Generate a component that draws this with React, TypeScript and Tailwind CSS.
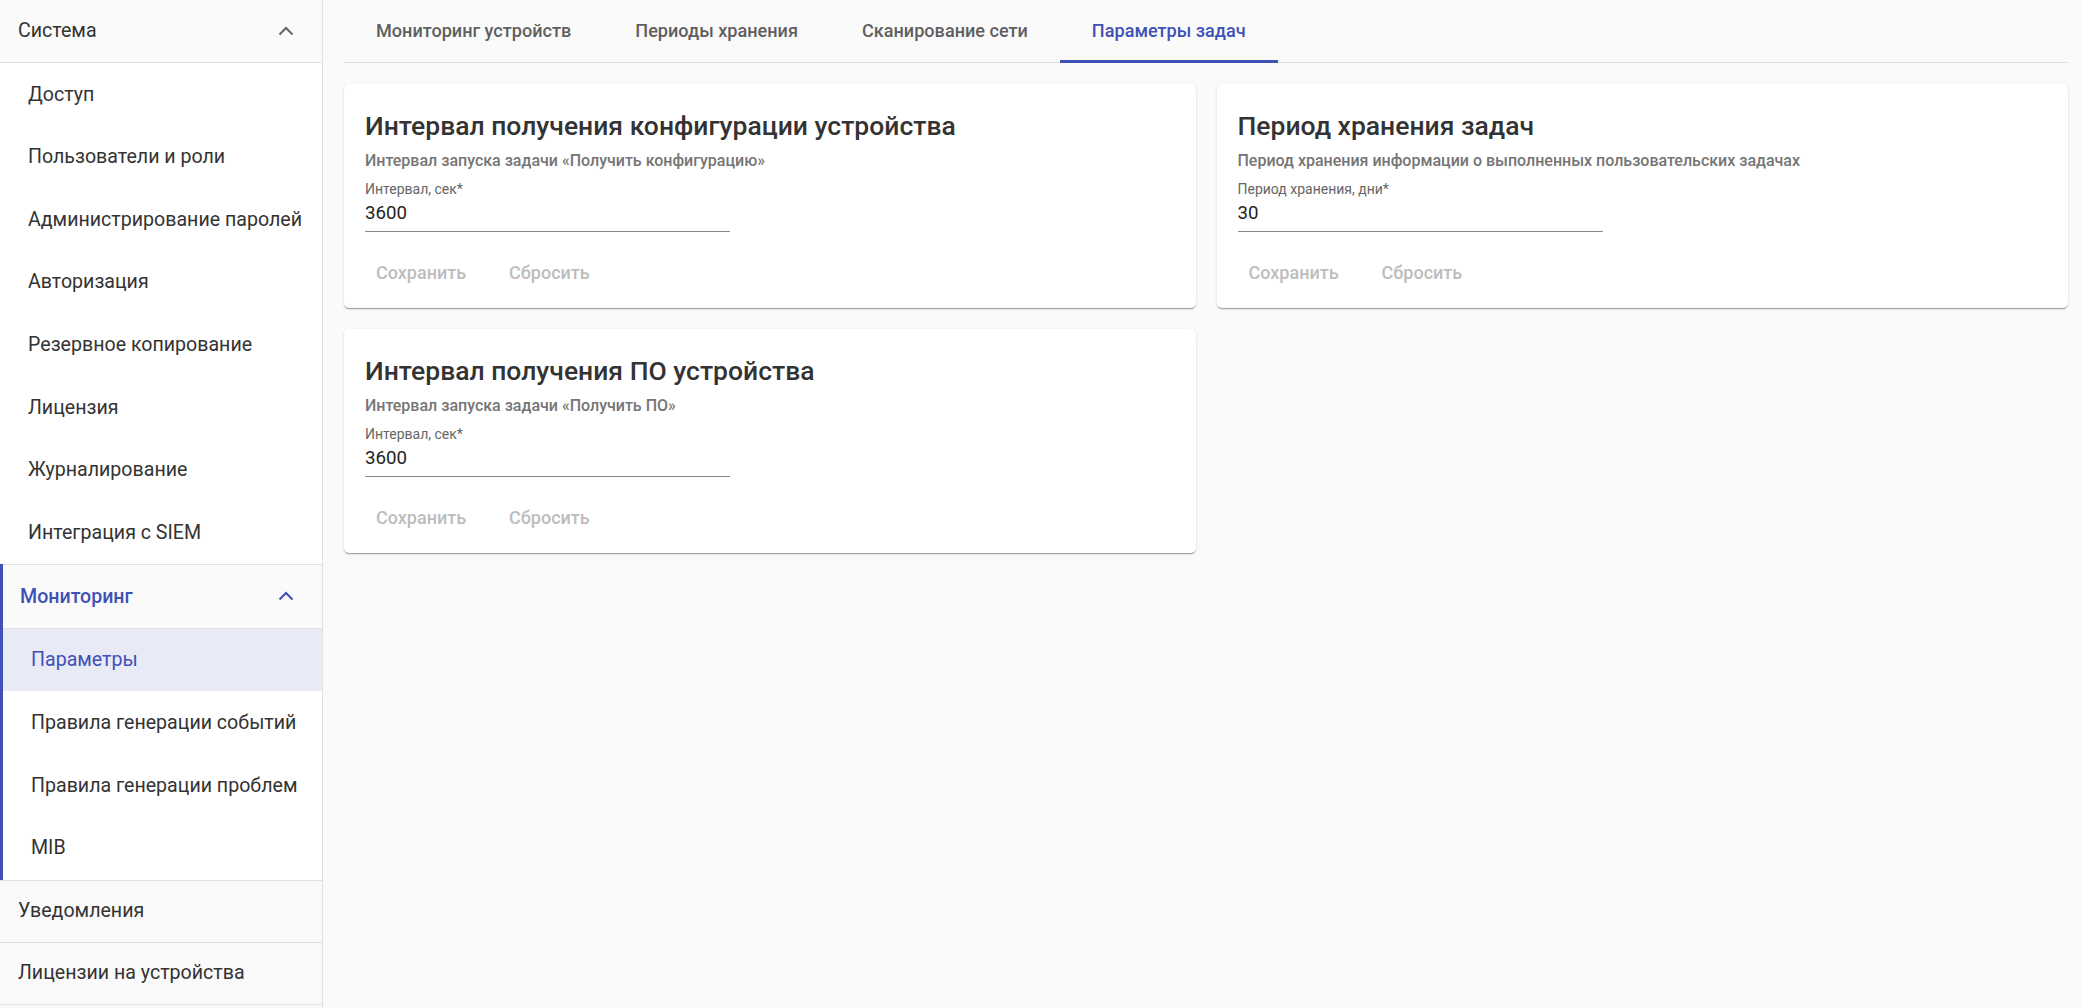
import React from "react";

const Chevron = ({ color }: { color: string }) => (
  <svg width="16" height="10" viewBox="0 0 16 10" fill="none">
    <polyline points="1.5,8.5 8,2 14.5,8.5" stroke={color} strokeWidth="2" fill="none" />
  </svg>
);

const systemItems = [
  "Доступ",
  "Пользователи и роли",
  "Администрирование паролей",
  "Авторизация",
  "Резервное копирование",
  "Лицензия",
  "Журналирование",
  "Интеграция с SIEM",
];

const monitoringItems = [
  "Параметры",
  "Правила генерации событий",
  "Правила генерации проблем",
  "MIB",
];

const tabs = [
  "Мониторинг устройств",
  "Периоды хранения",
  "Сканирование сети",
  "Параметры задач",
];

function Card({
  title,
  subtitle,
  label,
  value,
}: {
  title: string;
  subtitle: string;
  label: string;
  value: string;
}) {
  return (
    <div className="bg-white rounded-[5px] shadow-[0_2px_1px_-1px_rgba(0,0,0,0.2),0_1px_1px_0_rgba(0,0,0,0.14),0_1px_3px_0_rgba(0,0,0,0.12)] px-[21px] pt-[26px] pb-[11px] flex flex-col">
      <div className="text-[26.5px] leading-[32px] font-medium text-[#333333]">{title}</div>
      <div className="mt-[9px] text-[16px] leading-[20px] font-medium text-[#757575]">{subtitle}</div>
      <div className="mt-[10px] w-[365px] flex flex-col border-b border-[#8a8a8a] pb-[6px]">
        <div className="text-[14px] leading-[16px] text-[#666666]">{label}</div>
        <div className="mt-[4px] text-[18.67px] leading-[24px] text-[#222222]">{value}</div>
      </div>
      <div className="mt-[17px] flex h-[48px] items-center gap-[21px]">
        <div className="px-[11px] text-[18px] leading-[24px] font-medium text-[#bdbdbd]">Сохранить</div>
        <div className="px-[11px] text-[18px] leading-[24px] font-medium text-[#bdbdbd]">Сбросить</div>
      </div>
    </div>
  );
}

export default function App() {
  return (
    <div
      className="flex h-[1008px] w-[2082px] overflow-hidden bg-[#fafafa]"
      style={{ fontFamily: "Roboto, 'Noto Sans', sans-serif" }}
    >
      {/* Sidebar */}
      <div className="w-[323px] shrink-0 border-r border-[#e0e0e0] flex flex-col bg-[#fafafa]">
        <div className="h-[63px] shrink-0 border-b border-[#e0e0e0] flex items-center justify-between pl-[18px] pr-[28px] text-[19.6px] text-[#333333]">
          <span>Система</span>
          <Chevron color="#666666" />
        </div>
        {systemItems.map((t) => (
          <div
            key={t}
            className="h-[62.6px] shrink-0 bg-white flex items-center pl-[28px] text-[19.6px] text-[#333333]"
          >
            {t}
          </div>
        ))}
        <div className="border-l-[3px] border-[#3f51b5] flex flex-col shrink-0">
          <div className="h-[65px] shrink-0 border-y border-[#e0e0e0] bg-[#fafafa] flex items-center justify-between pl-[17px] pr-[28px] text-[19.6px] font-medium text-[#3f51b5]">
            <span>Мониторинг</span>
            <Chevron color="#3f51b5" />
          </div>
          {monitoringItems.map((t, i) => (
            <div
              key={t}
              className={
                i === 0
                  ? "h-[62.7px] shrink-0 bg-[#e8eaf6] flex items-center pl-[28px] text-[19.6px] text-[#3f51b5]"
                  : "h-[62.7px] shrink-0 bg-white flex items-center pl-[28px] text-[19.6px] text-[#333333]"
              }
            >
              {t}
            </div>
          ))}
        </div>
        <div className="h-[63px] shrink-0 border-y border-[#e0e0e0] bg-[#fafafa] flex items-center pl-[18px] text-[19.6px] text-[#333333]">
          Уведомления
        </div>
        <div className="h-[62px] shrink-0 border-b border-[#e0e0e0] bg-[#fafafa] flex items-center pl-[18px] text-[19.6px] text-[#333333]">
          Лицензии на устройства
        </div>
        <div className="flex-1 bg-[#fafafa]" />
      </div>

      {/* Main */}
      <div className="flex-1 flex flex-col pl-[21px] pr-[14px]">
        <div className="h-[63px] shrink-0 border-b border-[#e0e0e0] flex">
          {tabs.map((t, i) => (
            <div
              key={t}
              className={
                i === 3
                  ? "relative h-full px-[32px] flex items-center text-[18.1px] font-medium text-[#3f51b5]"
                  : "relative h-full px-[32px] flex items-center text-[18.1px] font-medium text-[#5f5f5f]"
              }
            >
              {t}
              {i === 3 && <div className="absolute left-0 right-0 -bottom-px h-[3px] bg-[#3f51b5]" />}
            </div>
          ))}
        </div>
        <div className="mt-[21px] grid grid-cols-2 gap-[21px] items-start">
          <Card
            title="Интервал получения конфигурации устройства"
            subtitle="Интервал запуска задачи «Получить конфигурацию»"
            label="Интервал, сек*"
            value="3600"
          />
          <Card
            title="Период хранения задач"
            subtitle="Период хранения информации о выполненных пользовательских задачах"
            label="Период хранения, дни*"
            value="30"
          />
          <Card
            title="Интервал получения ПО устройства"
            subtitle="Интервал запуска задачи «Получить ПО»"
            label="Интервал, сек*"
            value="3600"
          />
        </div>
      </div>
    </div>
  );
}
